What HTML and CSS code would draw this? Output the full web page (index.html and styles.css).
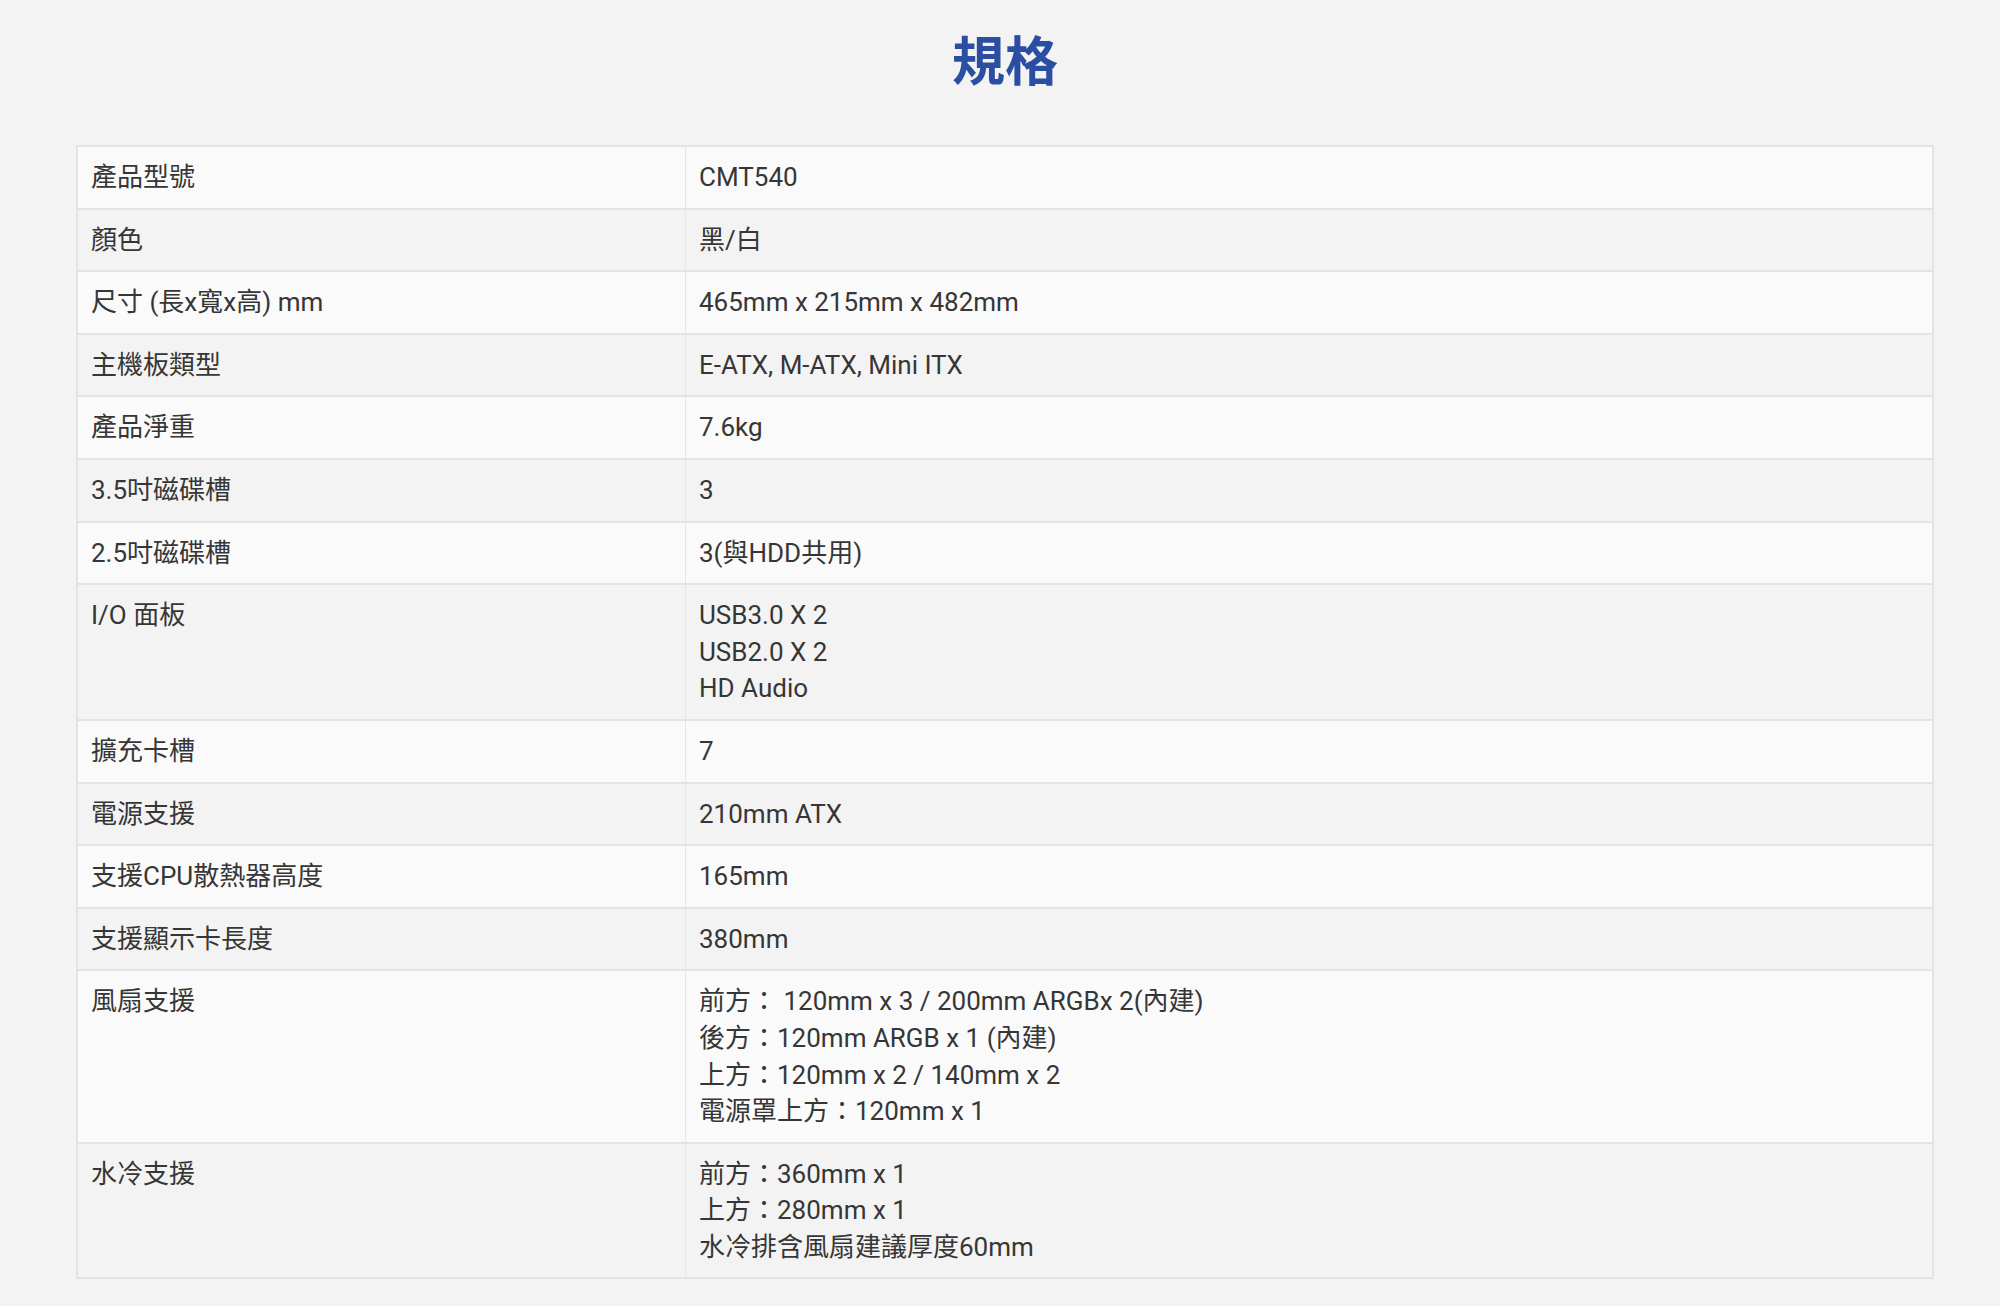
FILE: index.html
```html
<!DOCTYPE html>
<html lang="zh-Hant">
<head>
  <meta charset="UTF-8">
  <title>規格</title>
  <link rel="stylesheet" href="styles.css">
</head>
<body>

  <div id="specs">
    <h1>規格</h1>

    <table class="spec-table">
      <tr><td class="label">產品型號</td><td>CMT540</td></tr>
      <tr><td class="label">顏色</td><td>黑/白</td></tr>
      <tr><td class="label">尺寸 (長x寬x高) mm</td><td>465mm x 215mm x 482mm</td></tr>
      <tr><td class="label">主機板類型</td><td>E-ATX, M-ATX, Mini ITX</td></tr>
      <tr><td class="label">產品淨重</td><td>7.6kg</td></tr>
      <tr><td class="label">3.5吋磁碟槽</td><td>3</td></tr>
      <tr><td class="label">2.5吋磁碟槽</td><td>3(與HDD共用)</td></tr>
      <tr><td class="label">I/O 面板</td><td>USB3.0 X 2<br>USB2.0 X 2<br>HD Audio</td></tr>
      <tr><td class="label">擴充卡槽</td><td>7</td></tr>
      <tr><td class="label">電源支援</td><td>210mm ATX</td></tr>
      <tr><td class="label">支援CPU散熱器高度</td><td>165mm</td></tr>
      <tr><td class="label">支援顯示卡長度</td><td>380mm</td></tr>
      <tr><td class="label">風扇支援</td><td>前方：&nbsp;120mm x 3 / 200mm ARGBx 2(內建)<br>後方：120mm ARGB x 1 (內建)<br>上方：120mm x 2 / 140mm x 2<br>電源罩上方：120mm x 1</td></tr>
      <tr><td class="label">水冷支援</td><td>前方：360mm x 1<br>上方：280mm x 1<br>水冷排含風扇建議厚度60mm</td></tr>
    </table>
  </div>

</body>
</html>
```

FILE: styles.css
```css
body {
  margin: 0;
  padding: 0;
  background-color: #f3f3f3;
  font-family: Roboto, "Noto Sans CJK TC", sans-serif;
  color: #363636;
}

#specs { padding: 0 66px 30px 76px; }

h1 {
  margin: 0;
  padding: 19px 0 0;
  height: 145px;
  box-sizing: border-box;
  text-align: center;
  font-size: 53px;
  line-height: 78px;
  font-weight: 700;
  color: #2c4ea2;
  font-family: "Noto Sans CJK TC", sans-serif;
}

.spec-table {
  width: 100%;
  border-collapse: collapse;
  border: 2px solid #e3e3e3;
  font-size: 26px;
  line-height: 36.6px;
}
.spec-table tr:nth-child(odd) { background-color: #fafafa; }
.spec-table tr:nth-child(even) { background-color: #f3f3f3; }
.spec-table td {
  vertical-align: top;
  padding: 12px 13px 12px 13px;
  border-top: 2px solid #e3e3e3;
  border-left: 1px solid #e6e6e6;
}
.spec-table td.label { width: 581px; }
```
